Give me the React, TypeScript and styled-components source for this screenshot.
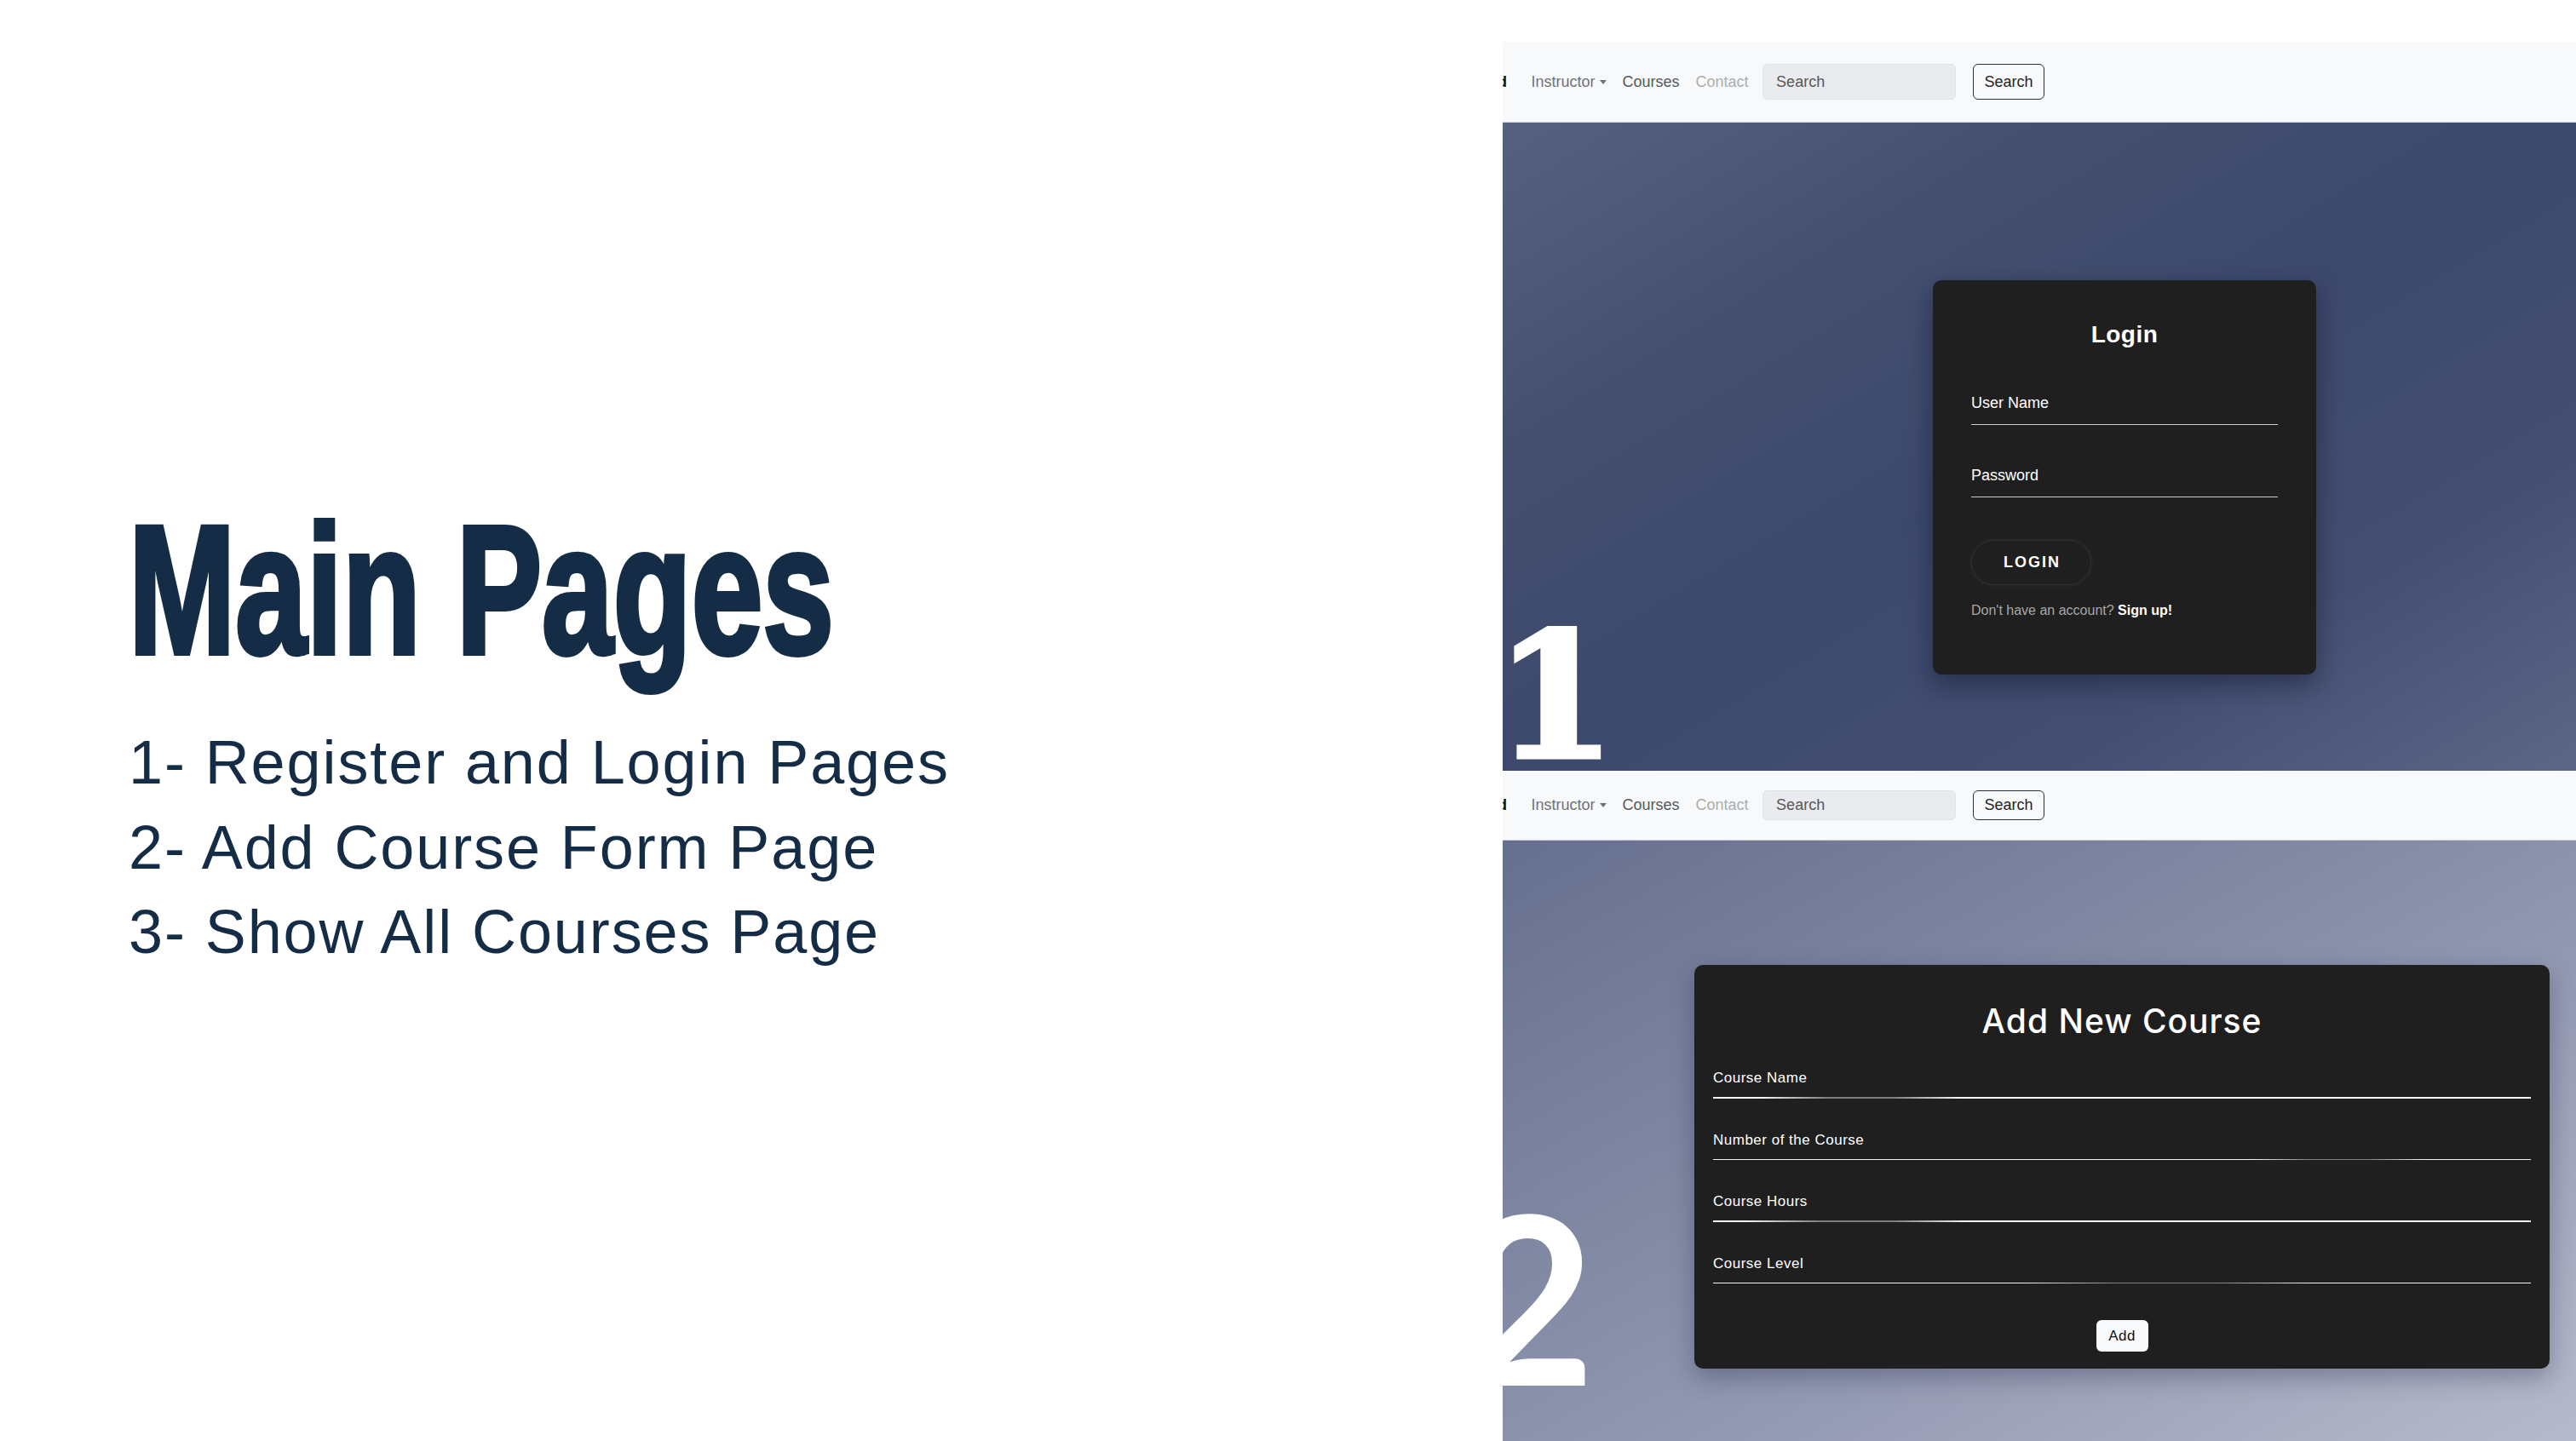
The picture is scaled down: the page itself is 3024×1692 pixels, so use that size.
import React from 'react'
import styled, { createGlobalStyle } from 'styled-components'

const GlobalStyle = createGlobalStyle`
  html, body {
    margin: 0;
    padding: 0;
    background: #ffffff;
  }
  body {
    font-family: "Liberation Sans", Arial, sans-serif;
  }
  * {
    box-sizing: border-box;
  }
`

const Page = styled.div`
  width: 3024px;
  height: 1692px;
  display: grid;
  grid-template-columns: 1764px 1260px;
  overflow: hidden;
  background: #ffffff;
`

/* ---------- left side: slide text ---------- */

const Intro = styled.div`
  padding: 585px 0 0 151px;
  color: #142c46;
`

const Title = styled.h1`
  margin: 0;
  font-family: "Liberation Sans", Arial, sans-serif;
  font-weight: 700;
  font-size: 215px;
  line-height: 215px;
  white-space: nowrap;
  -webkit-text-stroke: 6px #142c46;
  transform: scaleX(0.7);
  transform-origin: left center;
`

const PageList = styled.ol`
  list-style: none;
  margin: 46px 0 0 0;
  padding: 0;
`

const PageItem = styled.li`
  font-size: 72px;
  line-height: 99.5px;
  letter-spacing: 1.9px;
  white-space: nowrap;
`

/* ---------- right side: screenshots ---------- */

const Showcase = styled.div`
  display: flex;
  flex-direction: column;
  padding-top: 49px;
`

const Navbar = styled.nav<{ $height: number }>`
  height: ${p => p.$height}px;
  flex-shrink: 0;
  background: #f8f9fa;
  display: flex;
  align-items: center;
  overflow: hidden;
  font-size: 18px;
  border-bottom: 1px solid #ccd0d6;
`

const Brand = styled.span`
  font-weight: 700;
  color: #111;
  margin-left: -6px;
  margin-right: 19px;
`

const NavLink = styled.a<{ $tone: 'muted' | 'active' | 'disabled' }>`
  display: flex;
  align-items: center;
  padding: 0 9.5px;
  color: ${p => (p.$tone === 'active' ? '#55575a' : p.$tone === 'disabled' ? '#acadae' : '#707174')};
  text-decoration: none;
  white-space: nowrap;
`

const Caret = styled.span`
  display: inline-block;
  margin-left: 5px;
  border-left: 4.5px solid transparent;
  border-right: 4.5px solid transparent;
  border-top: 5px solid #707174;
`

const SearchInput = styled.input<{ $height: number }>`
  margin-left: 7px;
  width: 227px;
  height: ${p => p.$height}px;
  padding: 0 15px;
  background: #e9ebee;
  border: 1px solid #dfe2e6;
  border-radius: 6px;
  font-family: "Liberation Sans", Arial, sans-serif;
  font-size: 18px;
  color: #333;
  outline: none;

  &::placeholder {
    color: #55585c;
  }
`

const SearchButton = styled.button<{ $height: number }>`
  margin-left: 20px;
  width: 84px;
  height: ${p => p.$height}px;
  background: transparent;
  border: 1px solid #2b2f33;
  border-radius: 6px;
  font-family: "Liberation Sans", Arial, sans-serif;
  font-size: 18px;
  color: #212529;
  padding: 0;
`

const Hero = styled.div<{ $height: number; $bg: string; $top: number; $left: number }>`
  position: relative;
  height: ${p => p.$height}px;
  flex-shrink: 0;
  background: ${p => p.$bg};
  overflow: hidden;
  display: flex;
  align-items: flex-start;
  padding: ${p => p.$top}px 0 0 ${p => p.$left}px;
`

const BigDigit = styled.span<{ $font: string; $size: number; $weight: number; $stroke: number; $x: number; $y: number }>`
  position: absolute;
  left: ${p => p.$x}px;
  top: ${p => p.$y}px;
  font-family: ${p => p.$font};
  font-size: ${p => p.$size}px;
  font-weight: ${p => p.$weight};
  line-height: 1;
  color: #ffffff;
  -webkit-text-stroke: ${p => p.$stroke}px #ffffff;
`

/* login card */

const LoginCard = styled.form`
  width: 450px;
  height: 463px;
  background: #1f1f1f;
  border-radius: 10px;
  box-shadow: 0 12px 30px rgba(12, 16, 34, 0.45);
  padding: 47px 45px 0;
  display: flex;
  flex-direction: column;
  color: #ffffff;
`

const LoginTitle = styled.h2`
  margin: 0;
  text-align: center;
  font-size: 28px;
  line-height: 34px;
  font-weight: 700;
  letter-spacing: 0.5px;
`

const LoginField = styled.div<{ $gap: number }>`
  margin-top: ${p => p.$gap}px;
  padding-bottom: 14px;
  border-bottom: 1.5px solid #cdcdcd;
  font-size: 18px;
  line-height: 22px;
`

const PillButton = styled.button`
  margin-top: 50px;
  align-self: flex-start;
  width: 141px;
  height: 53px;
  border-radius: 27px;
  background: #1f1f1f;
  border: 1px solid #303030;
  box-shadow: 0 0 6px rgba(255, 255, 255, 0.06);
  color: #ffffff;
  font-family: "Liberation Sans", Arial, sans-serif;
  font-weight: 700;
  font-size: 18px;
  letter-spacing: 2px;
  padding: 0 0 0 2px;
`

const SignupText = styled.p`
  margin: 20px 0 0;
  font-size: 16px;
  line-height: 20px;
  color: #a7a7a7;

  strong {
    color: #ffffff;
    font-weight: 700;
  }
`

/* add course card */

const CourseCard = styled.form`
  width: 1004px;
  height: 474px;
  background: #1f1f1f;
  border-radius: 10px;
  box-shadow: 0 10px 28px rgba(34, 38, 66, 0.35);
  padding: 42px 22px 0;
  display: flex;
  flex-direction: column;
  color: #ffffff;
`

const CourseTitle = styled.h2`
  margin: 0;
  text-align: center;
  font-family: Inter, "Liberation Sans", sans-serif;
  font-weight: 500;
  font-size: 39px;
  line-height: 48px;
  letter-spacing: 1px;
`

const CourseField = styled.div<{ $gap: number }>`
  margin-top: ${p => p.$gap}px;
  font-size: 17px;
  line-height: 20px;
  letter-spacing: 0.5px;
`

const Underline = styled.div<{ $from: number; $to: number }>`
  height: 1.5px;
  margin-top: 12px;
  background: linear-gradient(
    90deg,
    #f4f4f4 0%,
    #f4f4f4 ${p => p.$from}%,
    #7d7d7d ${p => (p.$from * 2 + p.$to) / 3}%,
    #7d7d7d ${p => (p.$from + p.$to * 2) / 3}%,
    #f4f4f4 ${p => p.$to}%,
    #f4f4f4 100%
  );
`

const AddButton = styled.button`
  margin-top: 43px;
  align-self: center;
  width: 61px;
  height: 37px;
  background: #f8f9fa;
  border: none;
  border-radius: 6px;
  font-family: "Liberation Sans", Arial, sans-serif;
  font-size: 17px;
  letter-spacing: 0.5px;
  color: #111;
  padding: 0;
`

const pages = ['1- Register and Login Pages', '2- Add Course Form Page', '3- Show All Courses Page']

const courseFields = [
  { label: 'Course Name', from: 6, to: 30 },
  { label: 'Number of the Course', from: 66, to: 87 },
  { label: 'Course Hours', from: 4, to: 31 },
  { label: 'Course Level', from: 38, to: 73 },
]

const TopNav = ({ height, inputHeight }: { height: number; inputHeight: number }) => (
  <Navbar $height={height}>
    <Brand>d</Brand>
    <NavLink $tone="muted">
      Instructor
      <Caret />
    </NavLink>
    <NavLink $tone="active">Courses</NavLink>
    <NavLink $tone="disabled">Contact</NavLink>
    <SearchInput $height={inputHeight} placeholder="Search" readOnly />
    <SearchButton $height={inputHeight} type="button">
      Search
    </SearchButton>
  </Navbar>
)

const App = () => {
  return (
    <>
      <GlobalStyle />
      <Page>
        <Intro>
          <Title>Main Pages</Title>
          <PageList>
            {pages.map(p => (
              <PageItem key={p}>{p}</PageItem>
            ))}
          </PageList>
        </Intro>

        <Showcase>
          <TopNav height={95} inputHeight={42} />
          <Hero
            $height={761}
            $top={185}
            $left={505}
            $bg="linear-gradient(to bottom right, #57617f 0%, #45506f 25%, #3c496d 50%, #434e72 75%, #5c6687 100%)"
          >
            <BigDigit
              $font={'"DejaVu Serif", "Liberation Serif", serif'}
              $size={204}
              $weight={700}
              $stroke={5}
              $x={-9}
              $y={571}
            >
              1
            </BigDigit>
            <LoginCard>
              <LoginTitle>Login</LoginTitle>
              <LoginField $gap={52}>User Name</LoginField>
              <LoginField $gap={48}>Password</LoginField>
              <PillButton type="button">LOGIN</PillButton>
              <SignupText>
                Don't have an account? <strong>Sign up!</strong>
              </SignupText>
            </LoginCard>
          </Hero>

          <TopNav height={82} inputHeight={35} />
          <Hero
            $height={705}
            $top={146}
            $left={225}
            $bg="linear-gradient(to bottom right, #666f8e 0%, #7f87a2 35%, #979db5 65%, #b6bacb 100%)"
          >
            <BigDigit $font={'Lato, "Open Sans", sans-serif'} $size={276} $weight={700} $stroke={0} $x={-51} $y={396}>
              2
            </BigDigit>
            <CourseCard>
              <CourseTitle>Add New Course</CourseTitle>
              {courseFields.map((f, i) => (
                <CourseField key={f.label} $gap={i === 0 ? 33 : 39}>
                  {f.label}
                  <Underline $from={f.from} $to={f.to} />
                </CourseField>
              ))}
              <AddButton type="button">Add</AddButton>
            </CourseCard>
          </Hero>
        </Showcase>
      </Page>
    </>
  )
}

export default App
